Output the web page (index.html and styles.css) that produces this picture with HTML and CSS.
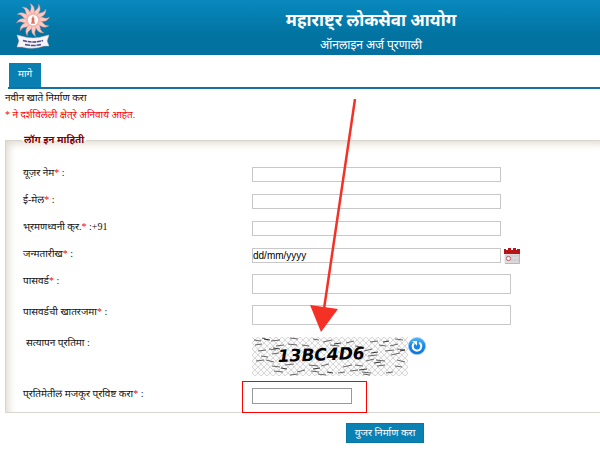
FILE: index.html
```html
<!DOCTYPE html>
<html lang="mr">
<head>
    <meta charset="UTF-8">
    <meta name="viewport" content="width=device-width, initial-scale=1.0">
    <title>महाराष्ट्र लोकसेवा आयोग</title>
    <link rel="stylesheet" href="styles.css">
</head>
<body>

    <!-- Header -->
    <header>
        <svg class="logo" viewBox="0 0 34 46" aria-hidden="true">
            <defs>
                <path id="ray" d="M15 11 C12 8.5 17.5 5.5 14 0.5 C20.5 4 17 8 19.5 11 Z"/>
            </defs>
            <g fill="#fbc9c2" stroke="#e58b84" stroke-width="0.4">
                <use href="#ray"/>
                <use href="#ray" transform="rotate(30 17 17)"/>
                <use href="#ray" transform="rotate(60 17 17)"/>
                <use href="#ray" transform="rotate(90 17 17)"/>
                <use href="#ray" transform="rotate(120 17 17)"/>
                <use href="#ray" transform="rotate(150 17 17)"/>
                <use href="#ray" transform="rotate(180 17 17)"/>
                <use href="#ray" transform="rotate(210 17 17)"/>
                <use href="#ray" transform="rotate(240 17 17)"/>
                <use href="#ray" transform="rotate(270 17 17)"/>
                <use href="#ray" transform="rotate(300 17 17)"/>
                <use href="#ray" transform="rotate(330 17 17)"/>
            </g>
            <circle cx="17" cy="17" r="6.8" fill="#f5b5ac"/>
            <circle cx="17" cy="17" r="5.2" fill="#fff"/>
            <path d="M17 13.5v6M15.5 16h3M15.5 18h3M15 20h4" stroke="#d8432c" stroke-width="1.1" fill="none"/>
            <path d="M1 32 L5 33 Q17 37 29 33 L33 32 L31 38 L33 43 L28 43 Q17 47 6 44 L1 44 L3 38 Z" fill="#f7f5f8" stroke="#dfb6b8" stroke-width="0.5"/>
            <path d="M7 37.5 Q17 40.5 27 37.5" stroke="#4d4c92" stroke-width="1.6" stroke-dasharray="4 0.7" fill="none"/>
            <path d="M9 41.5 Q17 43.5 25 41.5" stroke="#4d4c92" stroke-width="1.5" stroke-dasharray="5 0.8" fill="none"/>
        </svg>
        <div class="titles">
            <h1>महाराष्ट्&zwnj;र लोकसेवा आयोग</h1>
            <p>ऑनलाइन अर्ज प्&zwnj;रणाली</p>
        </div>
    </header>

    <!-- Navigation -->
    <nav>
        <a class="tab" href="#">मागे</a>
    </nav>

    <!-- Registration Form -->
    <main>
        <p class="page-name">नवीन खाते निर्माण करा</p>
        <p class="required-note">* ने दर्शविलेली क्षेत्&zwnj;रे अनिवार्य आहेत.</p>

        <form>
            <fieldset>
                <legend>लॉग इन माहिती</legend>

                <div class="row">
                    <label for="username">यूज़र नेम<span class="star">*</span> :</label>
                    <input type="text" id="username">
                </div>
                <div class="row">
                    <label for="email">ई-मेल<span class="star">*</span> :</label>
                    <input type="text" id="email">
                </div>
                <div class="row">
                    <label for="mobile">भ्&zwnj;रमणध्वनी क्&zwnj;र.<span class="star">*</span> :+91</label>
                    <input type="text" id="mobile">
                </div>
                <div class="row">
                    <label for="dob">जन्मतारीख<span class="star">*</span> :</label>
                    <input type="text" id="dob" value="dd/mm/yyyy">
                    <button type="button" class="icon-btn calendar" aria-label="Calendar">
                        <svg width="16" height="16" viewBox="0 0 16 16">
                            <rect x="0.5" y="4" width="15" height="11.5" fill="#dfdfe1"/>
                            <path d="M8 5v10M11 5v10M14 5v10M1 8h14M1 12h14" stroke="#c4c4c8" stroke-width="0.7"/>
                            <path d="M0 1h2v1h2V0h3v2h2V0h3v2h1V1h3v5H0z" fill="#b81418"/>
                            <path d="M15.5 6v9.5H1" stroke="#aaa" stroke-width="0.8" fill="none"/>
                            <circle cx="4.5" cy="10.5" r="2.1" fill="#fff" stroke="#c9515c"/>
                        </svg>
                    </button>
                </div>
                <div class="row tall">
                    <label for="password">पासवर्ड<span class="star">*</span> :</label>
                    <input type="password" id="password">
                </div>
                <div class="row tall">
                    <label for="confirm">पासवर्डची खातरजमा<span class="star">*</span> :</label>
                    <input type="password" id="confirm">
                </div>
                <div class="row captcha-row">
                    <span class="caption">सत्यापन प्&zwnj;रतिमा :</span>
                    <svg class="captcha" width="156" height="39" viewBox="0 0 156 39">
                        <defs>
                            <pattern id="mesh" width="6" height="6" patternUnits="userSpaceOnUse">
                                <path d="M0 0L6 6M6 0L0 6" stroke="#cfcfcf" stroke-width="0.8"/>
                            </pattern>
                        </defs>
                        <rect width="156" height="39" fill="#fafafa"/>
                        <rect width="156" height="39" fill="url(#mesh)"/>
                        <path class="noise" d="M2 3l7 1M10 1l6 2M19 4l9-1M38 1l8 1M61 2l6 1M71 5l9-2M94 6l8-2M118 5l8-1M143 2l8 1M3 8l7-1M24 9l8-1M36 7l9 1M50 8l7 1M78 8l9 1M103 9l7 1M127 8l7 1M138 9l8-2"/>
                        <path class="noise" d="M6 14l8-1M17 12l7 1M112 14l8-2M133 14l9-1M145 12l8 1M9 19l7 1M20 17l7-1M116 19l9-1M139 18l9-2M4 24l8-1M14 23l8 2M114 24l8-2M124 23l9 1M145 23l8 2"/>
                        <path class="noise" d="M20 29l8 1M33 28l9-1M57 28l9 1M69 29l8-2M91 30l9-2M103 28l8 1M125 29l8-1M143 29l7 1M22 34l9 1M45 35l8-2M59 34l8 1M86 36l7-1M98 34l8-1M110 35l9 1M134 36l7-1M38 38l8-1M66 37l8 1M111 37l7 1"/>
                        <path class="noise thick" d="M12 2l6 1M82 7l7-1M119 16l7-1M131 5l6-1M148 14l5-1M29 31l6 1M61 32l7-1M107 33l8-1M122 26l7-1M75 35l6 1M21 11l7 1"/>
                        <text x="26" y="25" transform="rotate(-2 26 25)">13BC4D6</text>
                    </svg>
                    <button type="button" class="icon-btn" aria-label="Refresh">
                        <svg width="18" height="18" viewBox="0 0 18 18">
                            <defs>
                                <linearGradient id="blue" x1="0" y1="0" x2="0" y2="1">
                                    <stop offset="0" stop-color="#55b4f5"/>
                                    <stop offset="0.5" stop-color="#1687ea"/>
                                    <stop offset="1" stop-color="#0b73dc"/>
                                </linearGradient>
                            </defs>
                            <circle cx="9" cy="9" r="8.6" fill="url(#blue)" stroke="#8fc8f5" stroke-width="0.6"/>
                            <path d="M11.2 5.6A4.3 4.3 0 1 1 6 6.2" fill="none" stroke="#fff" stroke-width="2.1"/>
                            <path d="M4.2 4H9V8.8Z" fill="#fff"/>
                        </svg>
                    </button>
                </div>
                <div class="row">
                    <label for="answer">प्&zwnj;रतिमेतील मजकूर प्&zwnj;रविष्ट करा<span class="star">*</span> :</label>
                    <div class="answer">
                        <input type="text" id="answer">
                        <span class="highlight"></span>
                    </div>
                </div>
            </fieldset>

            <div class="actions">
                <button type="submit" class="submit-btn">युजर निर्माण करा</button>
            </div>
        </form>
    </main>

    <!-- Arrow pointing at the captcha -->
    <svg class="arrow" width="48" height="234" viewBox="0 0 48 234" aria-hidden="true">
        <path d="M45 0L14 210" stroke="#f53126" stroke-width="2.5"/>
        <path d="M0 206L28 210L11 233Z" fill="#f53126"/>
    </svg>

</body>
</html>
```
FILE: styles.css
```css
/* Basic Styles */
* {
    box-sizing: border-box;
}

body {
    font-family: "Liberation Serif", "Noto Sans Devanagari", serif;
    font-size: 10px;
    margin: 0;
    color: #111;
    background-color: #fff;
    position: relative;
    overflow-x: hidden;
}

h1, p {
    margin: 0;
}

/* Header */
header {
    display: flex;
    height: 55px;
    padding: 3px 0 0 16px;
    color: white;
    background: linear-gradient(#0889be, #0274a2 60%, #02719f);
}

.logo {
    width: 34px;
    height: 46px;
}

.titles {
    flex: 1;
    padding: 6px 0 0 92px;
    text-align: center;
}

.titles h1 {
    font-size: 17px;
    line-height: 24px;
}

.titles p {
    font-size: 12px;
    line-height: 24px;
}

/* Navigation */
nav {
    display: flex;
    margin-left: 8px;
    padding: 8px 0 0 1px;
    border-bottom: 2px solid #1670a0;
}

.tab {
    padding: 0 9px;
    color: white;
    background-color: #0a7fb2;
    line-height: 22px;
    height: 24px;
    text-decoration: none;
}

/* Form */
main {
    padding-left: 5px;
}

.page-name,
.required-note {
    line-height: 17px;
}

.required-note {
    color: #f00;
}

fieldset {
    margin: 10px 0 0;
    padding: 14px 0 3px 17px;
    border: 1px solid #d9d5cf;
    border-right: none;
    box-shadow: inset 5px 5px 8px -3px #ddd6cb;
}

legend {
    padding: 0 2px;
    margin-left: -1px;
    color: #800000;
    font-weight: bold;
    line-height: 14px;
}

.row {
    display: flex;
    align-items: flex-start;
    height: 27px;
}

.row label,
.caption {
    width: 229px;
    line-height: 24px;
}

.caption {
    padding-left: 3px;
}

.star {
    color: #f00;
}

.row input {
    width: 249px;
    height: 15px;
    margin: 6px 0 0;
    padding: 0;
    border: 1px solid #c8c8c8;
    background-color: #fff;
    font-family: "Liberation Sans", Arial, sans-serif;
    font-size: 10px;
}

.row.tall {
    height: 31px;
}

.row.tall input {
    width: 259px;
    height: 20px;
    margin-top: 5px;
}

.icon-btn {
    margin: 6px 0 0;
    padding: 0;
    border: none;
    background: none;
    line-height: 0;
    cursor: pointer;
}

.calendar {
    margin-left: 3px;
}

/* Captcha */
.captcha-row {
    height: 51px;
}

.captcha {
    margin-top: 6px;
}

.captcha text {
    font-family: "DejaVu Sans", sans-serif;
    font-size: 17px;
    font-weight: bold;
    font-style: italic;
    fill: #000;
}

.noise {
    fill: none;
    stroke: #666;
    stroke-width: 1;
}

.thick {
    stroke: #333;
}

.answer {
    position: relative;
}

.row .answer input {
    display: block;
    width: 100px;
    height: 16px;
    border-color: #999;
}

.highlight {
    position: absolute;
    top: -1px;
    left: -10px;
    width: 125px;
    height: 32px;
    border: 1px solid #f00;
    pointer-events: none;
}

.actions {
    padding: 10px 0 0 165px;
    text-align: center;
}

.submit-btn {
    height: 20px;
    padding: 0 8px;
    border: 1px solid #0a76a5;
    color: white;
    background-color: #0a81b3;
    font-family: inherit;
    font-size: 10px;
    cursor: pointer;
}

.arrow {
    position: absolute;
    top: 99px;
    left: 310px;
    pointer-events: none;
}
```
